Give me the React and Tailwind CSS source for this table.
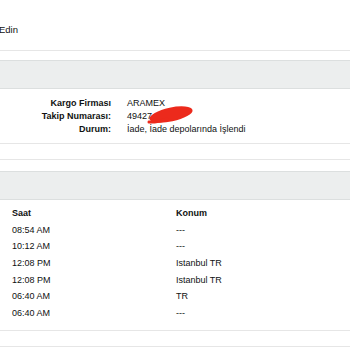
/**
 * Kargo takip detayı
 */

const events = [
  { time: '08:54 AM', place: '---' },
  { time: '10:12 AM', place: '---' },
  { time: '12:08 PM', place: 'Istanbul TR' },
  { time: '12:08 PM', place: 'Istanbul TR' },
  { time: '06:40 AM', place: 'TR' },
  { time: '06:40 AM', place: '---' },
];

function InfoRow({ label, children }) {
  return (
    <div className="flex h-[13px] items-center">
      <div className="w-[111px] text-right font-bold">{label}</div>
      <div className="ml-[16px]">{children}</div>
    </div>
  );
}

export default function App() {
  return (
    <div
      className="relative w-[350px] h-[350px] overflow-hidden bg-white text-[9px] leading-[13px] text-[#0f1111]"
      style={{ fontFamily: '"Liberation Sans", Arial, sans-serif' }}
    >
      <div className="h-[50px] pt-[23px]">
        <span className="-ml-px text-[9.5px]">Edin</span>
      </div>
      <div className="h-px bg-[#e6e6e6]" />
      <div className="h-[9px]" />
      <div className="h-[29px] bg-[#eceeee] border-y border-[#dcdfdf]" />

      <div className="pt-[8px] pb-[7px]">
        <InfoRow label="Kargo Firması">ARAMEX</InfoRow>
        <InfoRow label="Takip Numarası:">49427</InfoRow>
        <InfoRow label="Durum:">İade, İade depolarında İşlendi</InfoRow>
      </div>

      <div className="h-px bg-[#e6e6e6]" />
      <div className="h-[15px]" />
      <div className="h-px bg-[#e6e6e6]" />
      <div className="h-[11px]" />
      <div className="h-[29px] bg-[#eceeee] border-y border-[#dcdfdf]" />

      <div className="pt-[4px] pb-[8px] pl-[12px]">
        <div className="grid grid-cols-[164px_1fr] h-[18px] items-center font-bold">
          <div>Saat</div>
          <div>Konum</div>
        </div>
        {events.map((e, i) => (
          <div key={i} className="grid grid-cols-[164px_1fr] h-[16.6px] items-center">
            <div>{e.time}</div>
            <div>{e.place}</div>
          </div>
        ))}
      </div>

      <div className="h-px bg-[#e6e6e6]" />
      <div className="h-[15px]" />
      <div className="h-px bg-[#e6e6e6]" />

      {/* karalama */}
      <svg
        className="absolute left-[143px] top-[102px]"
        width="56"
        height="26"
        viewBox="0 0 56 26"
      >
        <ellipse
          cx="28"
          cy="12.5"
          rx="22"
          ry="7"
          transform="rotate(-12 28 12.5)"
          fill="#ec2a1c"
        />
        <path
          d="M6 20 Q 14 20.5 24 17"
          stroke="#ec2a1c"
          strokeWidth="3"
          strokeLinecap="round"
          fill="none"
        />
      </svg>
    </div>
  );
}
